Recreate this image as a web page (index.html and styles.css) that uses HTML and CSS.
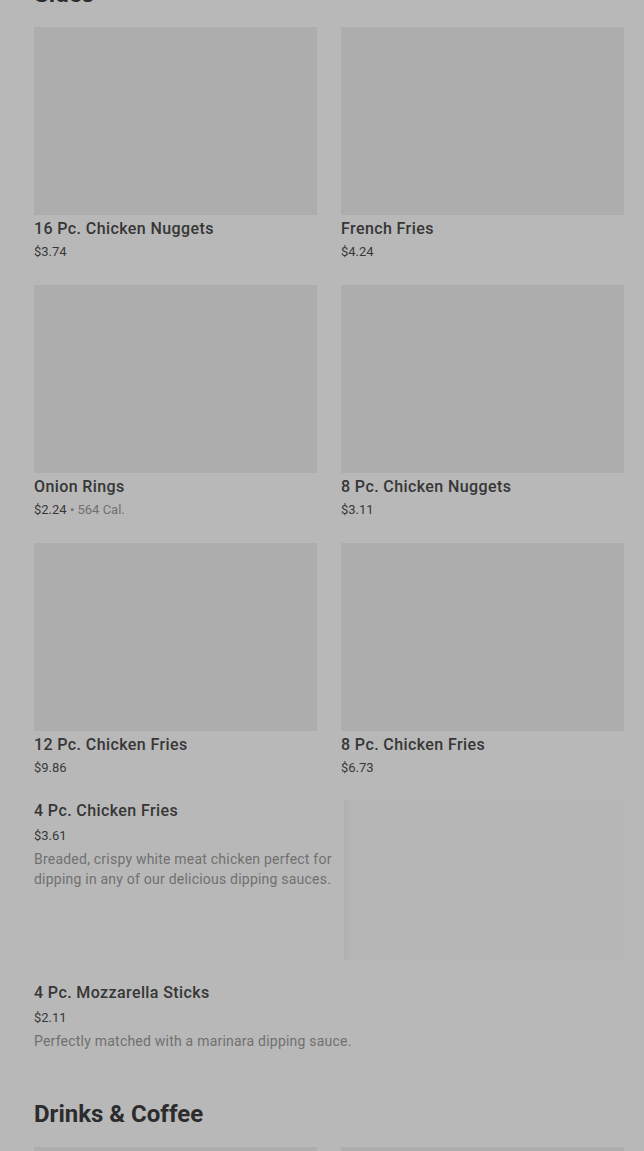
FILE: index.html
```html
<!DOCTYPE html>
<html lang="en">
<head>
<meta charset="utf-8">
<title>Menu</title>
<link rel="stylesheet" href="styles.css">
</head>
<body>
<main class="menu">
  <section class="section section-first">
    <h2 class="section-title">Sides</h2>
    <div class="grid">
      <div class="card">
        <div class="card-img"></div>
        <div class="item-title">16 Pc. Chicken Nuggets</div>
        <div class="item-price">$3.74</div>
      </div>
      <div class="card">
        <div class="card-img"></div>
        <div class="item-title">French Fries</div>
        <div class="item-price">$4.24</div>
      </div>
      <div class="card">
        <div class="card-img"></div>
        <div class="item-title">Onion Rings</div>
        <div class="item-price">$2.24 <span class="cal">• 564 Cal.</span></div>
      </div>
      <div class="card">
        <div class="card-img"></div>
        <div class="item-title">8 Pc. Chicken Nuggets</div>
        <div class="item-price">$3.11</div>
      </div>
      <div class="card">
        <div class="card-img"></div>
        <div class="item-title">12 Pc. Chicken Fries</div>
        <div class="item-price">$9.86</div>
      </div>
      <div class="card">
        <div class="card-img"></div>
        <div class="item-title">8 Pc. Chicken Fries</div>
        <div class="item-price">$6.73</div>
      </div>
    </div>
    <div class="list">
      <div class="row">
        <div class="row-text">
          <div class="item-title">4 Pc. Chicken Fries</div>
          <div class="item-price row-price">$3.61</div>
          <div class="item-desc">Breaded, crispy white meat chicken perfect for dipping in any of our delicious dipping sauces.</div>
        </div>
        <div class="row-img"></div>
      </div>
      <div class="row">
        <div class="row-text">
          <div class="item-title">4 Pc. Mozzarella Sticks</div>
          <div class="item-price row-price">$2.11</div>
          <div class="item-desc">Perfectly matched with a marinara dipping sauce.</div>
        </div>
      </div>
    </div>
  </section>
  <section class="section">
    <h2 class="section-title">Drinks &amp; Coffee</h2>
    <div class="grid">
      <div class="card">
        <div class="card-img"></div>
      </div>
      <div class="card">
        <div class="card-img"></div>
      </div>
    </div>
  </section>
</main>
</body>
</html>
```
FILE: styles.css
```css
html, body {
  margin: 0;
  padding: 0;
  background: #b8b8b8;
  overflow: hidden;
}
body {
  font-family: Roboto, "Liberation Sans", Arial, sans-serif;
  color: #303030;
}
.menu {
  padding: 0 20px 0 34px;
}
.section-first {
  margin-top: -22px;
}
.section-title {
  margin: 0 0 17px;
  font-size: 24px;
  line-height: 32px;
  font-weight: 700;
  color: #2c2c2c;
  letter-spacing: 0;
}
.grid {
  display: grid;
  grid-template-columns: 1fr 1fr;
  column-gap: 24px;
  row-gap: 24px;
  margin-bottom: 23px;
}
.card-img {
  height: 188px;
  background: #adadad;
}
.item-title {
  margin-top: 4px;
  font-size: 16px;
  line-height: 20px;
  font-weight: 500;
  letter-spacing: 0.4px;
  color: #363636;
}
.item-price {
  margin-top: 4px;
  font-size: 13px;
  line-height: 18px;
  color: #383838;
}
.cal {
  color: #707070;
}
.list {
  display: flex;
  flex-direction: column;
  gap: 22px;
  margin-bottom: 47px;
}
.row {
  display: flex;
  align-items: flex-start;
}
.row-text {
  flex: 1;
  min-width: 0;
}
.row-text .item-title {
  margin-top: 1px;
}
.row-price {
  margin-top: 6px;
}
.item-desc {
  margin-top: 4px;
  font-size: 14px;
  line-height: 20px;
  letter-spacing: 0.22px;
  color: #707070;
}
.row-img {
  flex: 0 0 280px;
  height: 160px;
  background: #b5b5b5;
  border-left: 4px solid #b2b2b2;
  box-sizing: border-box;
}
```
